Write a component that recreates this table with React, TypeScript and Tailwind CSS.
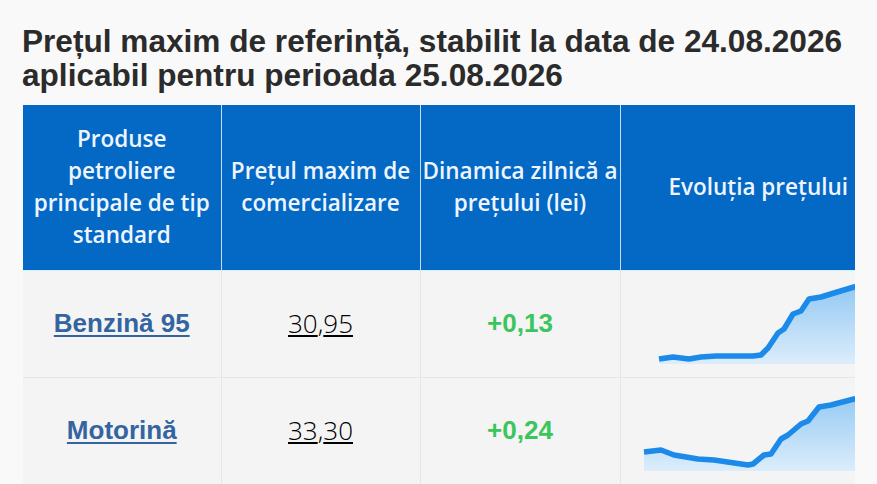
import React from 'react';

type Row = {
  name: string;
  price: [string, string];
  delta: string;
  line: [number, number][];
};

const rows: Row[] = [
  {
    name: 'Benzină 95',
    price: ['30', '95'],
    delta: '+0,13',
    line: [
      [38, 88], [45, 87], [52, 86], [60, 87], [68, 88], [80, 86], [95, 85], [132, 85],
      [140, 84], [147, 77], [157, 62], [163, 58], [172, 43], [180, 40], [188, 28],
      [200, 26], [213, 22], [233, 16], [245, 14], [276, 9],
    ],
  },
  {
    name: 'Motorină',
    price: ['33', '30'],
    delta: '+0,24',
    line: [
      [23, 74], [40, 72], [53, 77], [77, 81], [93, 82], [127, 87], [132, 86], [143, 77],
      [150, 76], [160, 61], [167, 57], [180, 46], [187, 43], [198, 29], [210, 27],
      [233, 21], [276, 10],
    ],
  },
];

// small price chart drawn into the last cell
function Sparkline({ points, id }: { points: [number, number][]; id: string }) {
  const d = points.map((p, i) => `${i === 0 ? 'M' : 'L'}${p[0]},${p[1]}`).join(' ');
  const first = points[0];
  const last = points[points.length - 1];
  const area = `${d} L${last[0]},93 L${first[0]},93 Z`;
  return (
    <svg width="276" height="106" viewBox="0 0 276 106" className="block">
      <defs>
        <linearGradient id={id} x1="0" y1="0" x2="0" y2="1">
          <stop offset="0%" stopColor="#8ec6f3" />
          <stop offset="100%" stopColor="#dcedfb" />
        </linearGradient>
      </defs>
      <path d={area} fill={`url(#${id})`} />
      <path d={d} fill="none" stroke="#1b8ae9" strokeWidth="5.5" strokeLinejoin="round" strokeLinecap="butt" />
    </svg>
  );
}

export default function App() {
  return (
    <div className="min-h-screen bg-[#f9f9f9] pl-[22px] pt-[24px]">
      <h1 className="text-[31.6px] leading-[34px] font-bold text-[#2b2b2b] font-['Liberation_Sans',Arial,sans-serif]">
        Prețul maxim de referință, stabilit la data de 24.08.2026
        <br />
        aplicabil pentru perioada 25.08.2026
      </h1>

      <div className="mt-[13px] ml-px w-[832px] overflow-hidden">
        <table className="border-collapse table-fixed w-[873px]">
          <colgroup>
            <col className="w-[198px]" />
            <col className="w-[199px]" />
            <col className="w-[200px]" />
            <col className="w-[276px]" />
          </colgroup>
          <thead>
            <tr className="h-[165px] bg-[#0468c5] text-[#eef5ff] font-['Open_Sans',sans-serif] font-semibold text-[22.5px] leading-[32px]">
              <th className="align-middle text-center px-0 border-r border-[#c9dcf2] font-semibold whitespace-nowrap">
                Produse
                <br />
                petroliere
                <br />
                principale de tip
                <br />
                standard
              </th>
              <th className="align-middle text-center px-0 border-r border-[#c9dcf2] font-semibold whitespace-nowrap">
                Prețul maxim de
                <br />
                comercializare
              </th>
              <th className="align-middle text-center px-0 border-r border-[#c9dcf2] font-semibold whitespace-nowrap">
                Dinamica zilnică a
                <br />
                prețului (lei)
              </th>
              <th className="align-middle text-center px-1 font-semibold">Evoluția prețului</th>
            </tr>
          </thead>
          <tbody>
            {rows.map((r, i) => (
              <tr
                key={r.name}
                className={`h-[106px] bg-[#f4f4f4] border-b border-[#e6e6e6] ${i === 0 ? 'border-t border-t-[#d6f0fd]' : ''}`}
              >
                <td className="text-center align-middle border-r border-[#e6e6e6]">
                  <a
                    href="#"
                    className="text-[26px] font-bold text-[#34649f] underline underline-offset-[3px] decoration-2 font-['Liberation_Sans',Arial,sans-serif]"
                  >
                    {r.name}
                  </a>
                </td>
                <td className="text-center align-middle border-r border-[#e6e6e6] text-[26px] font-light text-black font-['Open_Sans',sans-serif]">
                  <span className="underline underline-offset-[2px] decoration-2">{r.price[0]}</span>,
                  <span className="underline underline-offset-[2px] decoration-2">{r.price[1]}</span>
                </td>
                <td className="text-center align-middle border-r border-[#e6e6e6] text-[26px] font-bold text-[#3ac55d] font-['Liberation_Sans',Arial,sans-serif]">
                  {r.delta}
                </td>
                <td className="p-0 align-middle">
                  <Sparkline points={r.line} id={`g${i}`} />
                </td>
              </tr>
            ))}
          </tbody>
        </table>
      </div>
    </div>
  );
}
